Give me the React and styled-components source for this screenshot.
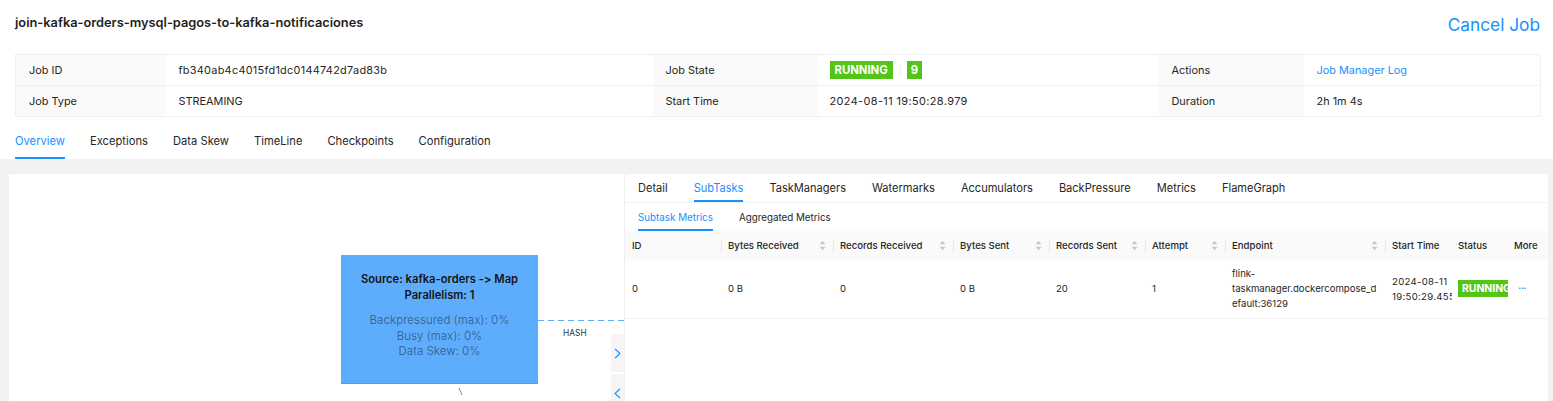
import React from "react";
import styled, { createGlobalStyle } from "styled-components";

const Global = createGlobalStyle`
  html, body { margin: 0; padding: 0; background: #fff; }
  body {
    font-family: Inter, "Noto Sans", sans-serif;
    color: #262626;
    font-feature-settings: "calt" 0, "liga" 0;
    font-variant-ligatures: none;
  }
  * { box-sizing: border-box; }
`;

const Page = styled.div`
  width: 1553px;
  height: 401px;
  overflow: hidden;
  display: flex;
  flex-direction: column;
`;

const Header = styled.div`
  flex: none;
  height: 46px;
  display: flex;
  align-items: center;
  justify-content: space-between;
  padding: 0 13px 0 15px;
`;

const Title = styled.h1`
  margin: 0;
  font-size: 12.8px;
  font-weight: 600;
  color: #1f1f1f;
  padding-bottom: 2px;
`;

const CancelLink = styled.a`
  font-size: 17.3px;
  color: #1890ff;
  cursor: pointer;
  padding-top: 2px;
`;

const Desc = styled.table`
  flex: none;
  margin: 8px 13px 0 15px;
  width: 1525px;
  border-collapse: collapse;
  table-layout: fixed;
  font-size: 10.9px;
  border: 1px solid #f0f0f0;
`;

const DescRow = styled.tr`
  height: 31px;
  border-bottom: 1px solid #f0f0f0;
`;

const DescLabel = styled.th`
  background: #fafafa;
  font-weight: 400;
  text-align: left;
  padding: 0 13px;
  color: #262626;
  width: ${(p) => p.$w}px;
`;

const DescValue = styled.td`
  padding: 0 13px 0 ${(p) => p.$pl || 13}px;
  color: #262626;
  width: ${(p) => p.$w}px;
  letter-spacing: ${(p) => p.$ls || 0}px;
`;

const BlueLink = styled.a`
  color: #1890ff;
  cursor: pointer;
`;

const Tag = styled.span`
  display: inline-block;
  background: #52c41a;
  color: #fff;
  font-weight: 700;
  font-size: 11.3px;
  line-height: 18px;
  padding: 0 ${(p) => p.$px || 5}px;
  vertical-align: middle;
`;

const VDivider = styled.span`
  display: inline-block;
  width: 1px;
  height: 10px;
  background: #eeeeee;
  margin: 0 6px 0 7px;
  vertical-align: middle;
`;

const TabBar = styled.div`
  display: flex;
  gap: ${(p) => p.$gap}px;
  padding-left: ${(p) => p.$pl}px;
  height: ${(p) => p.$h}px;
  align-items: stretch;
  border-bottom: ${(p) => (p.$border ? "1px solid #f0f0f0" : "none")};
  flex: none;
`;

const Tab = styled.div`
  display: flex;
  align-items: center;
  padding-top: ${(p) => p.$pt || 0}px;
  font-size: ${(p) => p.$fs}px;
  color: ${(p) => (p.$active ? "#1890ff" : "#262626")};
  border-bottom: 2px solid ${(p) => (p.$active ? "#1890ff" : "transparent")};
  white-space: nowrap;
`;

const Body = styled.div`
  flex: 1;
  min-height: 0;
  overflow: hidden;
  background: #f2f2f2;
  padding: 15px 6px 0 9px;
  display: flex;
`;

const Card = styled.div`
  flex: 1;
  background: #fff;
  display: flex;
  height: 260px;
`;

const Canvas = styled.div`
  position: relative;
  width: 615px;
  flex: none;
`;

const Node = styled.div`
  position: absolute;
  left: ${(p) => p.$x}px;
  top: ${(p) => p.$y}px;
  width: 197px;
  height: 129px;
  background: #5eadfc;
  border-bottom: 1px solid #4b9df0;
  display: flex;
  flex-direction: column;
  align-items: center;
  padding-top: 16px;
`;

const NodeTitle = styled.div`
  font-size: 11.2px;
  font-weight: 600;
  color: #141414;
  line-height: 16px;
`;

const NodeMetrics = styled.div`
  margin-top: 10px;
  font-size: 11.4px;
  color: rgba(0, 0, 0, 0.42);
  line-height: 15.5px;
  text-align: center;
`;

const EdgeSvg = styled.svg`
  position: absolute;
  left: 0;
  top: 0;
  overflow: visible;
`;

const EdgeLabel = styled.div`
  position: absolute;
  left: ${(p) => p.$x}px;
  top: ${(p) => p.$y}px;
  font-size: 8.4px;
  color: #333;
`;

const CollapseBtn = styled.div`
  position: absolute;
  right: 0;
  top: ${(p) => p.$y}px;
  width: 13px;
  height: 38px;
  background: #f5f5f5;
  display: flex;
  align-items: center;
  justify-content: center;
`;

const Panel = styled.div`
  flex: 1;
  display: flex;
  flex-direction: column;
  border-left: 1px solid #f0f0f0;
  min-width: 0;
`;

const Grid = styled.table`
  border-collapse: collapse;
  table-layout: fixed;
  width: 923px;
  font-size: 9.6px;
  color: #262626;
`;

const HeadRow = styled.tr`
  height: 29px;
  background: #fafafa;
`;

const Th = styled.th`
  width: ${(p) => p.$w}px;
  font-weight: 500;
  text-align: left;
  padding: 0 0 0 ${(p) => p.$pl || 7}px;
  position: ${(p) => (p.$fixed ? "relative" : "static")};
  z-index: ${(p) => (p.$fixed ? 1 : "auto")};
  background: #fafafa;
  box-shadow: ${(p) => (p.$shadow ? "-5px 0 6px -4px rgba(0,0,0,0.14)" : "none")};
`;

const ThInner = styled.div`
  display: flex;
  align-items: center;
  justify-content: space-between;
  padding-right: 7px;
  position: relative;
  white-space: nowrap;
  &::before {
    content: "";
    display: ${(p) => (p.$sep ? "block" : "none")};
    position: absolute;
    left: -7px;
    top: 50%;
    margin-top: -7px;
    width: 1px;
    height: 14px;
    background: #ebebeb;
  }
`;

const DataRow = styled.tr`
  height: 58px;
  border-bottom: 1px solid #f0f0f0;
`;

const Td = styled.td`
  padding: 0 ${(p) => (p.$clip ? 0 : 7)}px 0 ${(p) => p.$pl || 7}px;
  line-height: 15px;
  vertical-align: middle;
  background: #fff;
  position: ${(p) => (p.$fixed ? "relative" : "static")};
  z-index: ${(p) => (p.$fixed ? 1 : "auto")};
  box-shadow: ${(p) => (p.$shadow ? "-5px 0 6px -4px rgba(0,0,0,0.14)" : "none")};
  word-break: ${(p) => (p.$breakAll ? "break-all" : "normal")};
  letter-spacing: ${(p) => p.$ls || 0}px;
`;

const Clip = styled.div`
  overflow: hidden;
`;

const NoWrap = styled.span`
  white-space: nowrap;
`;

const SmallTag = styled(Tag)`
  font-size: 10.4px;
  line-height: 17px;
  padding: 0 4px;
  width: 50px;
  overflow: hidden;
  white-space: nowrap;
`;

const Dots = styled.span`
  color: #1890ff;
  font-size: 11px;
  letter-spacing: -0.5px;
  padding-left: 4px;
`;

function SortIcon() {
  return (
    <svg width="7" height="11" viewBox="0 0 7 11">
      <path d="M3.5 0.8 L6.3 4.2 L0.7 4.2 Z" fill="#c8c8c8" />
      <path d="M3.5 10.2 L6.3 6.8 L0.7 6.8 Z" fill="#c8c8c8" />
    </svg>
  );
}

function Chevron({ dir }) {
  return (
    <svg width="7" height="11" viewBox="0 0 7 11">
      <path
        d={dir === "right" ? "M1 1 L6 5.5 L1 10" : "M6 1 L1 5.5 L6 10"}
        fill="none"
        stroke="#1890ff"
        strokeWidth="1.1"
      />
    </svg>
  );
}

const columns = [
  { key: "id", label: "ID", w: 96 },
  { key: "br", label: "Bytes Received", w: 112, sort: true, sep: true },
  { key: "rr", label: "Records Received", w: 120, sort: true, sep: true },
  { key: "bs", label: "Bytes Sent", w: 96, sort: true, sep: true },
  { key: "rs", label: "Records Sent", w: 96, sort: true, sep: true },
  { key: "at", label: "Attempt", w: 80, sort: true, sep: true },
  { key: "ep", label: "Endpoint", w: 160, sort: true, sep: true },
  { key: "st", label: "Start Time", w: 67, sep: true },
];

const row = { id: "0", br: "0 B", rr: "0", bs: "0 B", rs: "20", at: "1" };

export default function App() {
  const topTabs = ["Overview", "Exceptions", "Data Skew", "TimeLine", "Checkpoints", "Configuration"];
  const panelTabs = ["Detail", "SubTasks", "TaskManagers", "Watermarks", "Accumulators", "BackPressure", "Metrics", "FlameGraph"];
  return (
    <Page>
      <Global />
      <Header>
        <Title>join-kafka-orders-mysql-pagos-to-kafka-notificaciones</Title>
        <CancelLink>Cancel Job</CancelLink>
      </Header>
      <Desc>
        <tbody>
          <DescRow>
            <DescLabel $w={150}>Job ID</DescLabel>
            <DescValue $w={487} $ls={0.28}>fb340ab4c4015fd1dc0144742d7ad83b</DescValue>
            <DescLabel $w={165}>Job State</DescLabel>
            <DescValue $w={341} $pl={12}>
              <Tag>RUNNING</Tag>
              <VDivider />
              <Tag $px={4}>9</Tag>
            </DescValue>
            <DescLabel $w={145}>Actions</DescLabel>
            <DescValue $w={237}>
              <BlueLink>Job Manager Log</BlueLink>
            </DescValue>
          </DescRow>
          <DescRow>
            <DescLabel>Job Type</DescLabel>
            <DescValue>STREAMING</DescValue>
            <DescLabel>Start Time</DescLabel>
            <DescValue $pl={12} $ls={0.4}>2024-08-11 19:50:28.979</DescValue>
            <DescLabel>Duration</DescLabel>
            <DescValue>2h 1m 4s</DescValue>
          </DescRow>
        </tbody>
      </Desc>
      <TabBar $gap={25} $pl={15} $h={42}>
        {topTabs.map((t, i) => (
          <Tab key={t} $fs={11.2} $pt={8} $active={i === 0}>
            {t}
          </Tab>
        ))}
      </TabBar>
      <Body>
        <Card>
          <Canvas>
            <Node $x={332} $y={81}>
              <NodeTitle>Source: kafka-orders -&gt; Map</NodeTitle>
              <NodeTitle>Parallelism: 1</NodeTitle>
              <NodeMetrics>
                Backpressured (max): 0%
                <br />
                Busy (max): 0%
                <br />
                Data Skew: 0%
              </NodeMetrics>
            </Node>
            <EdgeSvg width="615" height="240">
              <line x1="529" y1="146.5" x2="615" y2="146.5" stroke="#5eadfc" strokeWidth="1.2" strokeDasharray="6 4" />
              <line x1="450" y1="214" x2="453" y2="221" stroke="#6b8cb0" strokeWidth="1" />
            </EdgeSvg>
            <EdgeLabel $x={554} $y={154}>HASH</EdgeLabel>
            <CollapseBtn $y={160}>
              <Chevron dir="right" />
            </CollapseBtn>
            <CollapseBtn $y={200}>
              <Chevron dir="left" />
            </CollapseBtn>
          </Canvas>
          <Panel>
            <TabBar $gap={26} $pl={13} $h={29} $border>
              {panelTabs.map((t, i) => (
                <Tab key={t} $fs={11.05} $pt={1} $active={i === 1}>
                  {t}
                </Tab>
              ))}
            </TabBar>
            <TabBar $gap={26} $pl={13} $h={28}>
              {["Subtask Metrics", "Aggregated Metrics"].map((t, i) => (
                <Tab key={t} $fs={9.8} $pt={2} $active={i === 0}>
                  {t}
                </Tab>
              ))}
            </TabBar>
            <Grid>
              <thead>
                <HeadRow>
                  {columns.map((c) => (
                    <Th key={c.key} $w={c.w}>
                      <ThInner $sep={c.sep}>
                        <span>{c.label}</span>
                        {c.sort && <SortIcon />}
                      </ThInner>
                    </Th>
                  ))}
                  <Th $w={56} $pl={6} $fixed $shadow>
                    <ThInner>Status</ThInner>
                  </Th>
                  <Th $w={40} $pl={6} $fixed>
                    <ThInner>More</ThInner>
                  </Th>
                </HeadRow>
              </thead>
              <tbody>
                <DataRow>
                  <Td>{row.id}</Td>
                  <Td>{row.br}</Td>
                  <Td>{row.rr}</Td>
                  <Td>{row.bs}</Td>
                  <Td>{row.rs}</Td>
                  <Td>{row.at}</Td>
                  <Td $breakAll>
                    flink-
                    <br />
                    taskmanager.dockercompose_default:36129
                  </Td>
                  <Td $clip $ls={0.3}>
                    <Clip>
                      <NoWrap>2024-08-11</NoWrap>
                      <br />
                      <NoWrap>19:50:29.455</NoWrap>
                    </Clip>
                  </Td>
                  <Td $pl={6} $fixed $shadow>
                    <SmallTag>RUNNING</SmallTag>
                  </Td>
                  <Td $pl={6} $fixed>
                    <Dots>···</Dots>
                  </Td>
                </DataRow>
              </tbody>
            </Grid>
          </Panel>
        </Card>
      </Body>
    </Page>
  );
}
